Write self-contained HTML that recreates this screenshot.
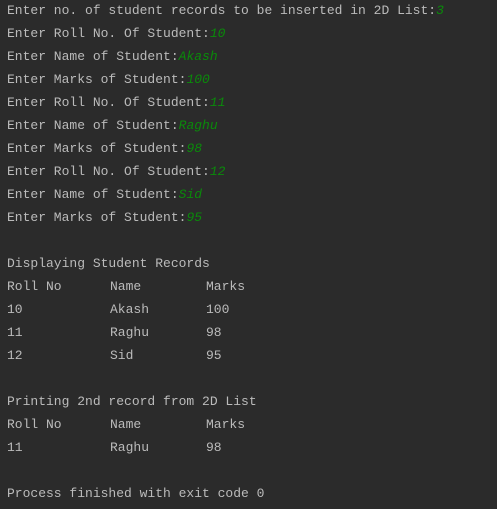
<!DOCTYPE html>
<html><head><style>
html,body{margin:0;padding:0;}
body{width:497px;height:509px;background:#2b2b2b;overflow:hidden;font-family:"Liberation Mono",monospace;font-size:13px;color:#bbbbbb;}
.c{position:absolute;left:7px;top:-1px;}
.l{height:23px;line-height:23px;white-space:pre;position:relative;}
.g{color:#0a8a0a;font-style:italic;}
.a{position:absolute;left:103px;}
.b{position:absolute;left:199px;}
</style></head><body>
<div class="c">
<div class="l">Enter no. of student records to be inserted in 2D List:<span class="g">3</span></div>
<div class="l">Enter Roll No. Of Student:<span class="g">10</span></div>
<div class="l">Enter Name of Student:<span class="g">Akash</span></div>
<div class="l">Enter Marks of Student:<span class="g">100</span></div>
<div class="l">Enter Roll No. Of Student:<span class="g">11</span></div>
<div class="l">Enter Name of Student:<span class="g">Raghu</span></div>
<div class="l">Enter Marks of Student:<span class="g">98</span></div>
<div class="l">Enter Roll No. Of Student:<span class="g">12</span></div>
<div class="l">Enter Name of Student:<span class="g">Sid</span></div>
<div class="l">Enter Marks of Student:<span class="g">95</span></div>
<div class="l"></div>
<div class="l">Displaying Student Records</div>
<div class="l">Roll No<span class="a">Name</span><span class="b">Marks</span></div>
<div class="l">10<span class="a">Akash</span><span class="b">100</span></div>
<div class="l">11<span class="a">Raghu</span><span class="b">98</span></div>
<div class="l">12<span class="a">Sid</span><span class="b">95</span></div>
<div class="l"></div>
<div class="l">Printing 2nd record from 2D List</div>
<div class="l">Roll No<span class="a">Name</span><span class="b">Marks</span></div>
<div class="l">11<span class="a">Raghu</span><span class="b">98</span></div>
<div class="l"></div>
<div class="l">Process finished with exit code 0</div>
</div>
</body></html>
